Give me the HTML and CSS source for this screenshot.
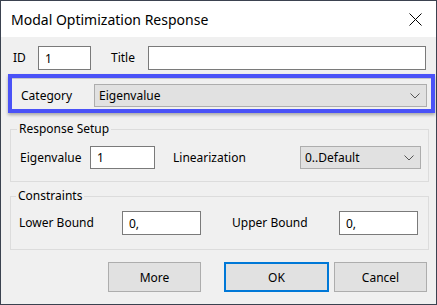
FILE: index.html
```html
<!DOCTYPE html>
<html lang="en">
<head>
    <meta charset="UTF-8">
    <meta name="viewport" content="width=device-width, initial-scale=1.0">
    <title>Modal Optimization Response</title>
    <link rel="stylesheet" href="styles.css">
</head>
<body>
    <div class="window">
        <div class="titlebar">
            <span class="title">Modal Optimization Response</span>
            <svg class="close" width="13" height="13" viewBox="0 0 13 13">
                <path d="M0.5 0.5 L12.5 12.5 M12.5 0.5 L0.5 12.5" stroke="#000" stroke-width="1" fill="none"/>
            </svg>
        </div>

        <div class="content">
            <div class="row-id">
                <span class="lbl lbl-id">ID</span>
                <input class="field field-id" type="text" value="1">
                <span class="lbl lbl-title">Title</span>
                <input class="field field-title" type="text" value="">
            </div>

            <div class="highlight">
                <span class="lbl lbl-category">Category</span>
                <div class="combo combo-category">
                    <span>Eigenvalue</span>
                    <svg width="10" height="6" viewBox="0 0 10 6"><path d="M0.5 0.5 L5 5 L9.5 0.5" stroke="#555" fill="none"/></svg>
                </div>
            </div>

            <fieldset class="group group-setup">
                <legend>Response Setup</legend>
                <div class="group-row">
                    <span class="lbl lbl-eigen">Eigenvalue</span>
                    <input class="field field-eigen" type="text" value="1">
                    <span class="lbl lbl-linear">Linearization</span>
                    <div class="combo combo-linear">
                        <span>0..Default</span>
                        <svg width="10" height="6" viewBox="0 0 10 6"><path d="M0.5 0.5 L5 5 L9.5 0.5" stroke="#555" fill="none"/></svg>
                    </div>
                </div>
            </fieldset>

            <fieldset class="group group-bounds">
                <legend>Constraints</legend>
                <div class="group-row">
                    <span class="lbl lbl-lower">Lower Bound</span>
                    <input class="field field-bound" type="text" value="0,">
                    <span class="lbl lbl-upper">Upper Bound</span>
                    <input class="field field-bound" type="text" value="0,">
                </div>
            </fieldset>

            <div class="buttons">
                <button class="button">More</button>
                <button class="button button-ok">OK</button>
                <button class="button">Cancel</button>
            </div>
        </div>
    </div>
</body>
</html>
```

FILE: styles.css
```css
body {
    margin: 0;
    font-family: "Noto Sans", sans-serif;
    font-size: 12px;
    color: #000;
}
.window {
    width: 437px;
    height: 305px;
    box-sizing: border-box;
    border: 1px solid #3b4250;
    display: flex;
    flex-direction: column;
    background-color: #f0f0f0;
}
.titlebar {
    height: 36px;
    background-color: #fff;
    display: flex;
    align-items: center;
    justify-content: space-between;
    padding: 0 14px 0 10px;
}
.title {
    font-size: 14px;
}
.content {
    flex: 1;
    padding-top: 9px;
}
.lbl {
    line-height: 16px;
    white-space: nowrap;
}
.field {
    box-sizing: border-box;
    height: 24px;
    border: 1px solid #7a7a7a;
    background-color: #fff;
    font-family: "Noto Sans", sans-serif;
    font-size: 12px;
    padding: 0 6px;
    margin: 0;
    outline: none;
}
.row-id {
    display: flex;
    align-items: center;
    padding-left: 12px;
}
.lbl-id {
    width: 25px;
}
.field-id {
    width: 53px;
}
.lbl-title {
    width: 37px;
    margin-left: 20px;
}
.field-title {
    width: 278px;
}
.highlight {
    display: flex;
    align-items: center;
    margin: 4px 1px 0 7px;
    border: 4px solid #4a52f7;
    padding: 6px 4px 2px 9px;
    box-shadow: 0 2px 3px rgba(0, 0, 0, 0.3), inset 0 1px 0 #c8c8c8;
}
.lbl-category {
    width: 73px;
}
.combo {
    box-sizing: border-box;
    height: 23px;
    border: 1px solid #adadad;
    background-color: #e1e1e1;
    display: flex;
    align-items: center;
    justify-content: space-between;
    padding: 0 6px 0 4px;
}
.combo-category {
    width: 333px;
}
.group {
    margin: 8px 7px 0 9px;
    border: 1px solid #dcdcdc;
    padding: 9px 7px 12px 9px;
}
.group legend {
    padding: 0 2px;
    margin-left: -3px;
    line-height: 16px;
}
.group-row {
    display: flex;
    align-items: center;
}
.group-setup .field {
    height: 23px;
}
.lbl-eigen {
    width: 70px;
}
.field-eigen {
    width: 65px;
}
.lbl-linear {
    width: 127px;
    margin-left: 18px;
}
.combo-linear {
    width: 121px;
}
.group-bounds {
    margin-top: 6px;
    padding: 7px 7px 14px 8px;
}
.lbl-lower {
    width: 103px;
}
.field-bound {
    width: 79px;
}
.lbl-upper {
    width: 107px;
    margin-left: 31px;
}
.buttons {
    display: flex;
    justify-content: flex-end;
    gap: 5px;
    margin-top: 12px;
    padding-right: 9px;
}
.button {
    box-sizing: border-box;
    width: 93px;
    height: 30px;
    border: 1px solid #adadad;
    background-color: #e1e1e1;
    font-family: "Noto Sans", sans-serif;
    font-size: 12px;
    color: #000;
    margin: 0;
    padding: 0;
}
.button:first-child {
    margin-right: 18px;
}
.button-ok {
    width: 105px;
    border: 2px solid #0078d7;
}
```
